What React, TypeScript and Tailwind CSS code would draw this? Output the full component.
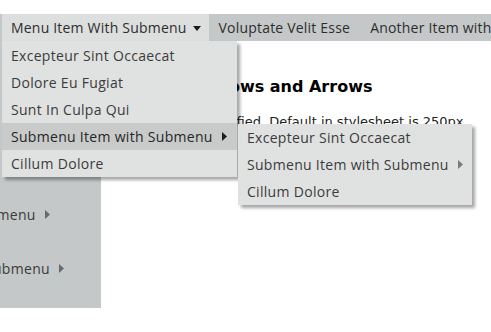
import * as React from "react";

const menuFont = { fontFamily: '"Open Sans", "Liberation Sans", sans-serif' };

function CaretDown() {
  return (
    <svg width="8" height="5" viewBox="0 0 8 5" className="ml-[6px] mt-[2px]">
      <path d="M0 0 L8 0 L4 5 Z" fill="#1a1a1a" />
    </svg>
  );
}

function CaretRight({ color = "#222" }: { color?: string }) {
  return (
    <svg width="5" height="9" viewBox="0 0 5 9" className="ml-[9px] shrink-0">
      <path d="M0 0 L5 4.5 L0 9 Z" fill={color} />
    </svg>
  );
}

function Row({
  label,
  arrow,
  active,
  arrowColor,
  children,
}: {
  label: string;
  arrow?: boolean;
  active?: boolean;
  arrowColor?: string;
  children?: React.ReactNode;
}) {
  return (
    <div
      className={`relative flex h-[27px] items-center whitespace-nowrap px-[9px] text-[14px] tracking-[0.3px] text-[#3b3b3b] ${
        active ? "bg-[#c8cbca] text-[#262626]" : ""
      }`}
    >
      <span>{label}</span>
      {arrow && <CaretRight color={arrowColor} />}
      {children}
    </div>
  );
}

const sideItems = [
  { label: "Excepteur Sint", arrow: false },
  { label: "Dolore Eu Fugiat", arrow: false },
  { label: "Sunt In Culpa", arrow: false },
  { label: "Cillum Dolore", arrow: false },
  { label: "Esse Cillum", arrow: false },
  { label: "Lorem Ipsum", arrow: false },
  { label: "Menu Item With Submenu", arrow: true },
  { label: "Voluptate Velit Esse", arrow: false },
  { label: "Another Item with Submenu", arrow: true },
  { label: "Cillum Dolore", arrow: false },
];

export default function App() {
  return (
    <div className="relative h-[332px] w-[491px] overflow-hidden bg-white" style={menuFont}>
      <div className="h-[14px]" />

      {/* Top bar */}
      <div className="relative z-20 flex h-[27px] bg-[#c4c8c8] pl-[2px] text-[14px] tracking-[0.2px] text-[#2e2e2e]">
        <div className="relative flex items-center whitespace-nowrap bg-[#dcdfde] pl-[9px] pr-[8px]">
          <span>Menu Item With Submenu</span>
          <CaretDown />

          {/* Dropdown */}
          <div className="absolute left-0 top-full w-[235px] bg-[#e0e2e1] pt-[1px] shadow-[3px_3px_3px_rgba(0,0,0,0.35)]">
            <Row label="Excepteur Sint Occaecat" />
            <Row label="Dolore Eu Fugiat" />
            <Row label="Sunt In Culpa Qui" />
            <Row label="Submenu Item with Submenu" arrow active arrowColor="#1e1e1e">
              {/* Flyout */}
              <div className="absolute left-full top-[1px] ml-[1px] w-[234px] bg-[#e0e2e1] shadow-[3px_3px_3px_rgba(0,0,0,0.35)]">
                <Row label="Excepteur Sint Occaecat" />
                <Row label="Submenu Item with Submenu" arrow arrowColor="#7a7a7a" />
                <Row label="Cillum Dolore" />
              </div>
            </Row>
            <Row label="Cillum Dolore" />
          </div>
        </div>
        <div className="flex items-center whitespace-nowrap px-[10px]">Voluptate Velit Esse</div>
        <div className="flex items-center whitespace-nowrap px-[10px]">Another Item with Submenu</div>
      </div>

      {/* Body */}
      <div className="flex">
        <div className="h-[267px] w-[101px] shrink-0 overflow-hidden bg-[#c4c8c8]">
          <div className="-ml-[151px] -mt-[2px]">
            {sideItems.map((it, i) => (
              <Row key={i} label={it.label} arrow={it.arrow} arrowColor="#6a6a6a" />
            ))}
          </div>
        </div>

        <div
          className="flex-1 pl-[12px] pr-[14px] text-black"
          style={{ fontFamily: '"DejaVu Sans", Verdana, sans-serif' }}
        >
          <h2 className="mt-[34px] text-[16px] font-bold leading-[24px]">Menus, Shadows and Arrows</h2>
          <p className="mt-[13px] text-[13px] leading-[20px] text-[#222]">
            Width can be specified. Default in stylesheet is 250px. Submenus open to the right and
            flip when there is no room.
          </p>
        </div>
      </div>
    </div>
  );
}
